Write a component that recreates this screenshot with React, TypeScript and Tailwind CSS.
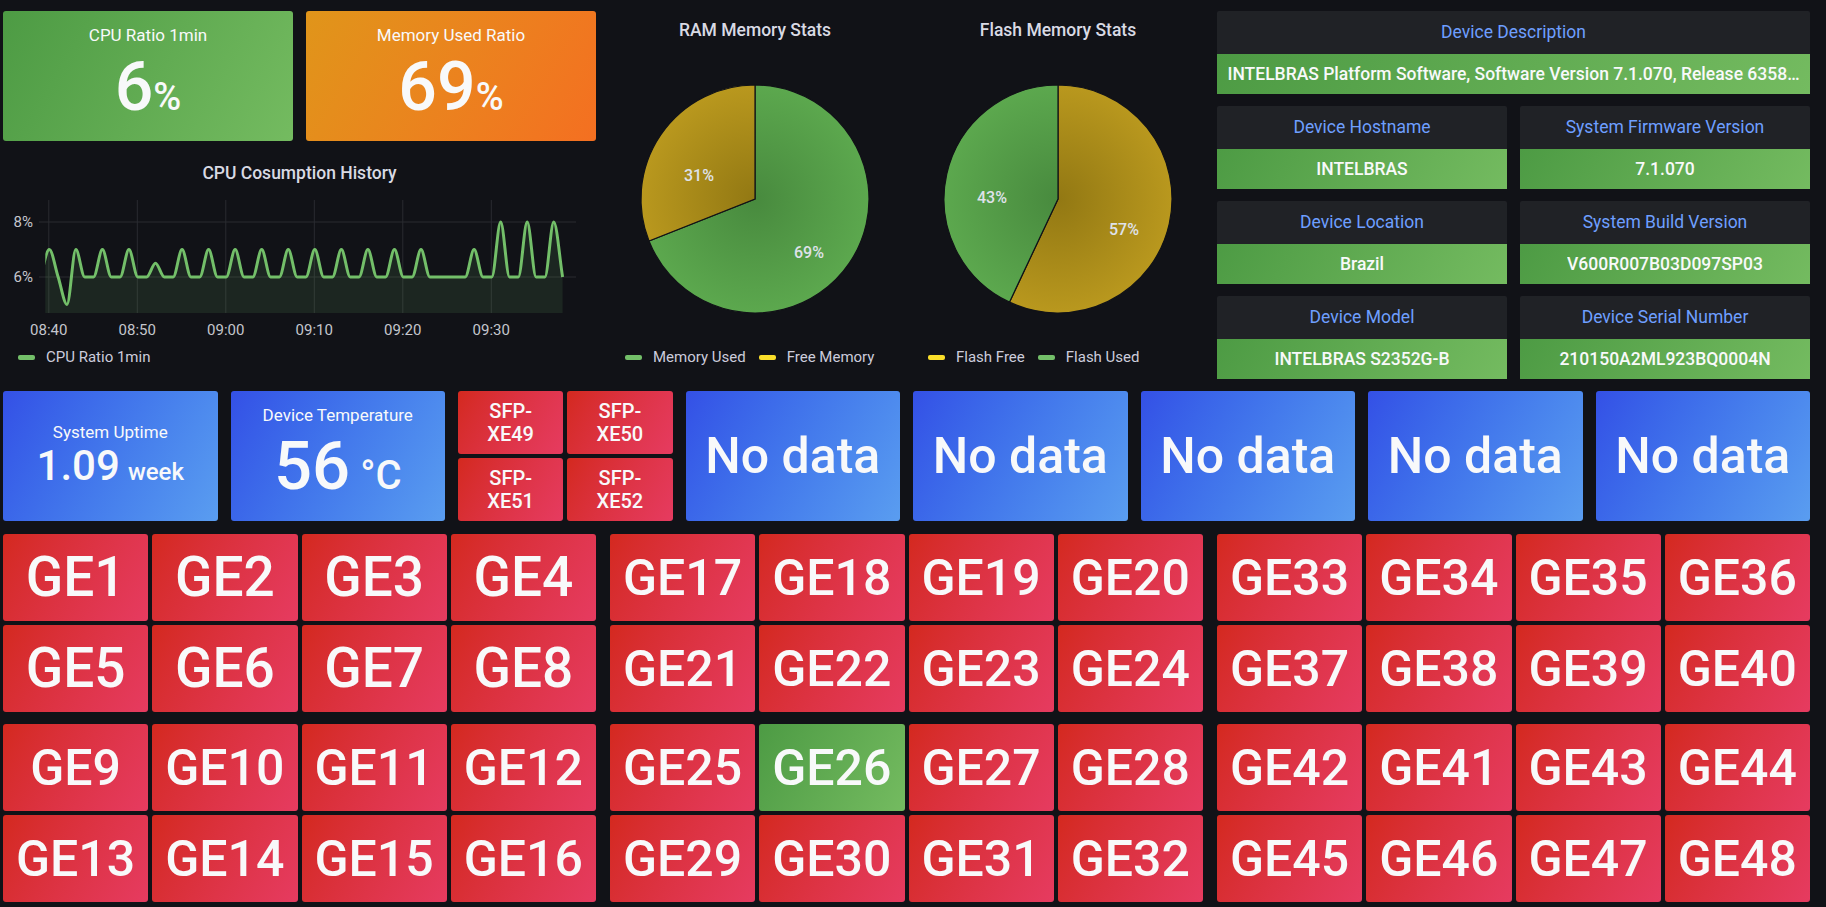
import React from 'react';

// gradient fills used by the stat tiles
const GREEN = 'bg-linear-120 from-[#4d9b44] to-[#74bb60]';
const ORANGE = 'bg-linear-120 from-[#e0951a] to-[#f46f21]';
const RED = 'bg-linear-120 from-[#d4291e] to-[#e63b60]';
const BLUE = 'bg-linear-120 from-[#3450e6] to-[#5a9df0]';

// --- CPU history data (one point per minute) ---
const PEAK7 = [0, 3, 6, 9, 15, 18, 21, 24, 27, 30, 33, 36, 39, 42, 48];
const PEAK8 = [51, 54, 57];
const cpuPoints: [number, number][] = Array.from({ length: 60 }, (_, k) => {
  const i = k - 1;
  let v = 6;
  if (PEAK7.includes(i)) v = 7;
  if (PEAK8.includes(i)) v = 8;
  if (i === 2) v = 5;
  if (i === 12) v = 6.5;
  return [46.3 + 8.85 * i, 85 - (v - 6) * 27.5];
});

function monotonePath(pts: [number, number][]) {
  const n = pts.length;
  const dx: number[] = [];
  const s: number[] = [];
  for (let i = 0; i < n - 1; i++) {
    dx.push(pts[i + 1][0] - pts[i][0]);
    s.push((pts[i + 1][1] - pts[i][1]) / dx[i]);
  }
  const m: number[] = new Array(n).fill(0);
  m[0] = s[0];
  m[n - 1] = s[n - 2];
  for (let i = 1; i < n - 1; i++) {
    if (s[i - 1] * s[i] <= 0) m[i] = 0;
    else m[i] = (3 * (dx[i - 1] + dx[i])) / ((2 * dx[i] + dx[i - 1]) / s[i - 1] + (dx[i] + 2 * dx[i - 1]) / s[i]);
  }
  let d = `M${pts[0][0]},${pts[0][1]}`;
  for (let i = 0; i < n - 1; i++) {
    const h = dx[i] / 3;
    d += ` C${pts[i][0] + h},${pts[i][1] + m[i] * h} ${pts[i + 1][0] - h},${pts[i + 1][1] - m[i + 1] * h} ${pts[i + 1][0]},${pts[i + 1][1]}`;
  }
  return d;
}

const TIMES = ['08:40', '08:50', '09:00', '09:10', '09:20', '09:30'];

const CpuChart = () => {
  const line = monotonePath(cpuPoints);
  const last = cpuPoints[cpuPoints.length - 1];
  const area = `${line} L${last[0]},121 L${cpuPoints[0][0]},121 Z`;
  return (
    <svg width="593" height="150" className="block">
      <defs>
        <clipPath id="plotClip">
          <rect x="42.3" y="-10" width="531" height="131" />
        </clipPath>
      </defs>
      {/* grid */}
      {[30, 85].map((y) => (
        <line key={y} x1="36" x2="573" y1={y} y2={y} stroke="#2a2b31" strokeWidth="1" />
      ))}
      {TIMES.map((_, k) => (
        <line key={k} x1={45.8 + 88.5 * k} x2={45.8 + 88.5 * k} y1="8" y2="121" stroke="#2a2b31" strokeWidth="1" />
      ))}
      <g clipPath="url(#plotClip)">
        <path d={area} fill="#73bf69" fillOpacity="0.12" />
        <path d={line} fill="none" stroke="#73bf69" strokeWidth="3" strokeLinejoin="round" />
      </g>
      {/* axes */}
      <g fontSize="15" fill="#c4c6cd" fontFamily="Roboto, sans-serif">
        <text x="30" y="30" textAnchor="end" dominantBaseline="central">8%</text>
        <text x="30" y="85" textAnchor="end" dominantBaseline="central">6%</text>
        {TIMES.map((t, k) => (
          <text key={t} x={45.8 + 88.5 * k} y="138" textAnchor="middle" dominantBaseline="central">
            {t}
          </text>
        ))}
      </g>
    </svg>
  );
};

// --- pies ---
function slicePath(cx: number, cy: number, r: number, a0: number, a1: number) {
  const p = (a: number) => [cx + r * Math.sin((a * Math.PI) / 180), cy - r * Math.cos((a * Math.PI) / 180)];
  const [x0, y0] = p(a0);
  const [x1, y1] = p(a1);
  const large = a1 - a0 > 180 ? 1 : 0;
  return `M${cx},${cy} L${x0},${y0} A${r},${r} 0 ${large} 1 ${x1},${y1} Z`;
}

type Slice = { from: number; to: number; color: 'g' | 'y'; label: string; lx: number; ly: number };

const Pie = ({ id, slices }: { id: string; slices: Slice[] }) => (
  <svg width="240" height="240" className="block">
    <defs>
      <radialGradient id={`${id}-g`} cx="120" cy="120" r="114" gradientUnits="userSpaceOnUse">
        <stop offset="0" stopColor="#488a3e" />
        <stop offset="1" stopColor="#5ca84e" />
      </radialGradient>
      <radialGradient id={`${id}-y`} cx="120" cy="120" r="114" gradientUnits="userSpaceOnUse">
        <stop offset="0" stopColor="#927813" />
        <stop offset="1" stopColor="#b9981e" />
      </radialGradient>
    </defs>
    {slices.map((s) => (
      <path
        key={s.label}
        d={slicePath(120, 120, 114, s.from, s.to)}
        fill={`url(#${id}-${s.color})`}
        stroke="#111217"
        strokeWidth="1.2"
      />
    ))}
    {slices.map((s) => (
      <text
        key={`${s.label}-t`}
        x={120 + s.lx}
        y={120 + s.ly}
        textAnchor="middle"
        dominantBaseline="central"
        fontSize="16"
        fontWeight="500"
        fill="#dfe2ea"
        fontFamily="Roboto, sans-serif"
      >
        {s.label}
      </text>
    ))}
  </svg>
);

const LegendItem = ({ color, text }: { color: string; text: string }) => (
  <div className="flex items-center gap-[11px]">
    <span className={`w-[17px] h-[5px] rounded-[2px] ${color}`} />
    <span className="text-[15px] text-[#ccccdc]">{text}</span>
  </div>
);

const PiePanel = ({ title, id, slices, legend }: { title: string; id: string; slices: Slice[]; legend: { color: string; text: string }[] }) => (
  <div className="flex flex-col">
    <div className="h-[38px] flex items-center justify-center text-[17.5px] font-medium text-[#d9dae4]">{title}</div>
    <div className="mt-[30px] flex justify-center">
      <Pie id={id} slices={slices} />
    </div>
    <div className="mt-[23px] h-[30px] pl-[15px] flex items-center gap-[13px]">
      {legend.map((l) => (
        <LegendItem key={l.text} color={l.color} text={l.text} />
      ))}
    </div>
  </div>
);

// --- stat boxes ---
const TopStat = ({ title, value, unit, color }: { title: string; value: string; unit: string; color: string }) => (
  <div className={`${color} rounded-[3px] flex flex-col items-center pt-[13px]`}>
    <div className="text-[17px] leading-[22px]">{title}</div>
    <div className="mt-[7px] flex items-baseline font-medium">
      <span className="text-[68px] leading-none">{value}</span>
      <span className="text-[38px] leading-none">{unit}</span>
    </div>
  </div>
);

const InfoPanel = ({ title, value }: { title: string; value: string }) => (
  <div className="flex flex-col h-[83px]">
    <div className="h-[43px] bg-[#202226] rounded-t-[2px] flex items-center justify-center text-[17.5px] text-[#6e9fff]">
      {title}
    </div>
    <div className={`${GREEN} h-[40px] px-[7px] flex items-center justify-center`}>
      <span className="truncate text-[17.5px] font-medium">{value}</span>
    </div>
  </div>
);

const NoData = () => (
  <div className={`${BLUE} rounded-[3px] flex items-center justify-center text-[50px] font-medium leading-none`}>No data</div>
);

const Tile = ({ label, up, big }: { label: string; up?: boolean; big?: boolean }) => (
  <div
    className={`${up ? GREEN : RED} h-[87px] rounded-[3px] flex items-center justify-center font-medium leading-none ${big ? 'text-[55px]' : 'text-[50px]'}`}
  >
    {label}
  </div>
);

const Block = ({ labels, big, up }: { labels: string[]; big?: boolean; up?: string }) => (
  <div className="grid grid-cols-4 gap-[4px]">
    {labels.map((l) => (
      <Tile key={l} label={l} big={big} up={l === up} />
    ))}
  </div>
);

const ge = (a: number, b: number) => Array.from({ length: b - a + 1 }, (_, k) => `GE${a + k}`);

export default function App() {
  return (
    <div className="w-[1826px] h-[907px] overflow-hidden bg-[#111217] font-[Roboto,sans-serif] text-[#f8f9fa]">
      <div className="w-[1807px] ml-[3px] pt-[11px] flex flex-col">
        {/* top section */}
        <div className="grid grid-cols-3 gap-x-[14px] h-[368px]">
          <div className="flex flex-col">
            <div className="grid grid-cols-2 gap-x-[13px] h-[130px]">
              <TopStat title="CPU Ratio 1min" value="6" unit="%" color={GREEN} />
              <TopStat title="Memory Used Ratio" value="69" unit="%" color={ORANGE} />
            </div>
            <div className="mt-[13px] flex flex-col">
              <div className="h-[38px] flex items-center justify-center text-[17.5px] font-medium text-[#d9dae4]">
                CPU Cosumption History
              </div>
              <CpuChart />
              <div className="h-[30px] pl-[15px] flex items-center">
                <LegendItem color="bg-[#73bf69]" text="CPU Ratio 1min" />
              </div>
            </div>
          </div>

          <div className="grid grid-cols-2 gap-x-[13px]">
            <PiePanel
              title="RAM Memory Stats"
              id="ram"
              slices={[
                { from: 0, to: 248.4, color: 'g', label: '69%', lx: 54, ly: 53 },
                { from: 248.4, to: 360, color: 'y', label: '31%', lx: -56, ly: -24 },
              ]}
              legend={[
                { color: 'bg-[#73bf69]', text: 'Memory Used' },
                { color: 'bg-[#fade2a]', text: 'Free Memory' },
              ]}
            />
            <PiePanel
              title="Flash Memory Stats"
              id="flash"
              slices={[
                { from: 0, to: 205.2, color: 'y', label: '57%', lx: 66, ly: 30 },
                { from: 205.2, to: 360, color: 'g', label: '43%', lx: -66, ly: -2 },
              ]}
              legend={[
                { color: 'bg-[#fade2a]', text: 'Flash Free' },
                { color: 'bg-[#73bf69]', text: 'Flash Used' },
              ]}
            />
          </div>

          <div className="flex flex-col gap-y-[12px]">
            <InfoPanel
              title="Device Description"
              value="INTELBRAS Platform Software, Software Version 7.1.070, Release 6358…"
            />
            <div className="grid grid-cols-2 gap-x-[13px] gap-y-[12px]">
              <InfoPanel title="Device Hostname" value="INTELBRAS" />
              <InfoPanel title="System Firmware Version" value="7.1.070" />
              <InfoPanel title="Device Location" value="Brazil" />
              <InfoPanel title="System Build Version" value="V600R007B03D097SP03" />
              <InfoPanel title="Device Model" value="INTELBRAS S2352G-B" />
              <InfoPanel title="Device Serial Number" value="210150A2ML923BQ0004N" />
            </div>
          </div>
        </div>

        {/* second row */}
        <div className="grid grid-cols-8 gap-x-[13px] h-[130px] mt-[12px]">
          <div className={`${BLUE} rounded-[3px] flex flex-col items-center pt-[30px]`}>
            <div className="text-[17px] leading-[22px]">System Uptime</div>
            <div className="mt-[2px] flex items-baseline font-medium">
              <span className="text-[42px] leading-none">1.09</span>
              <span className="ml-[8px] text-[24px] leading-none">week</span>
            </div>
          </div>
          <div className={`${BLUE} rounded-[3px] flex flex-col items-center pt-[13px]`}>
            <div className="text-[17px] leading-[22px]">Device Temperature</div>
            <div className="mt-[7px] flex items-baseline font-medium">
              <span className="text-[67px] leading-none">56</span>
              <span className="ml-[10px] text-[40px] leading-none">°C</span>
            </div>
          </div>
          <div className="grid grid-cols-2 grid-rows-2 gap-[4px]">
            {['XE49', 'XE50', 'XE51', 'XE52'].map((p) => (
              <div
                key={p}
                className={`${RED} rounded-[3px] flex flex-col items-center justify-center text-[20px] leading-[23px] font-medium`}
              >
                <span>SFP-</span>
                <span>{p}</span>
              </div>
            ))}
          </div>
          <NoData />
          <NoData />
          <NoData />
          <NoData />
          <NoData />
        </div>

        {/* interfaces */}
        <div className="grid grid-cols-3 gap-x-[14px] mt-[13px]">
          <div className="flex flex-col gap-y-[12px]">
            <Block labels={ge(1, 8)} big />
            <Block labels={ge(9, 16)} />
          </div>
          <div className="flex flex-col gap-y-[12px]">
            <Block labels={ge(17, 24)} />
            <Block labels={ge(25, 32)} up="GE26" />
          </div>
          <div className="flex flex-col gap-y-[12px]">
            <Block labels={ge(33, 40)} />
            <Block labels={['GE42', 'GE41', 'GE43', 'GE44', ...ge(45, 48)]} />
          </div>
        </div>
      </div>
    </div>
  );
}
